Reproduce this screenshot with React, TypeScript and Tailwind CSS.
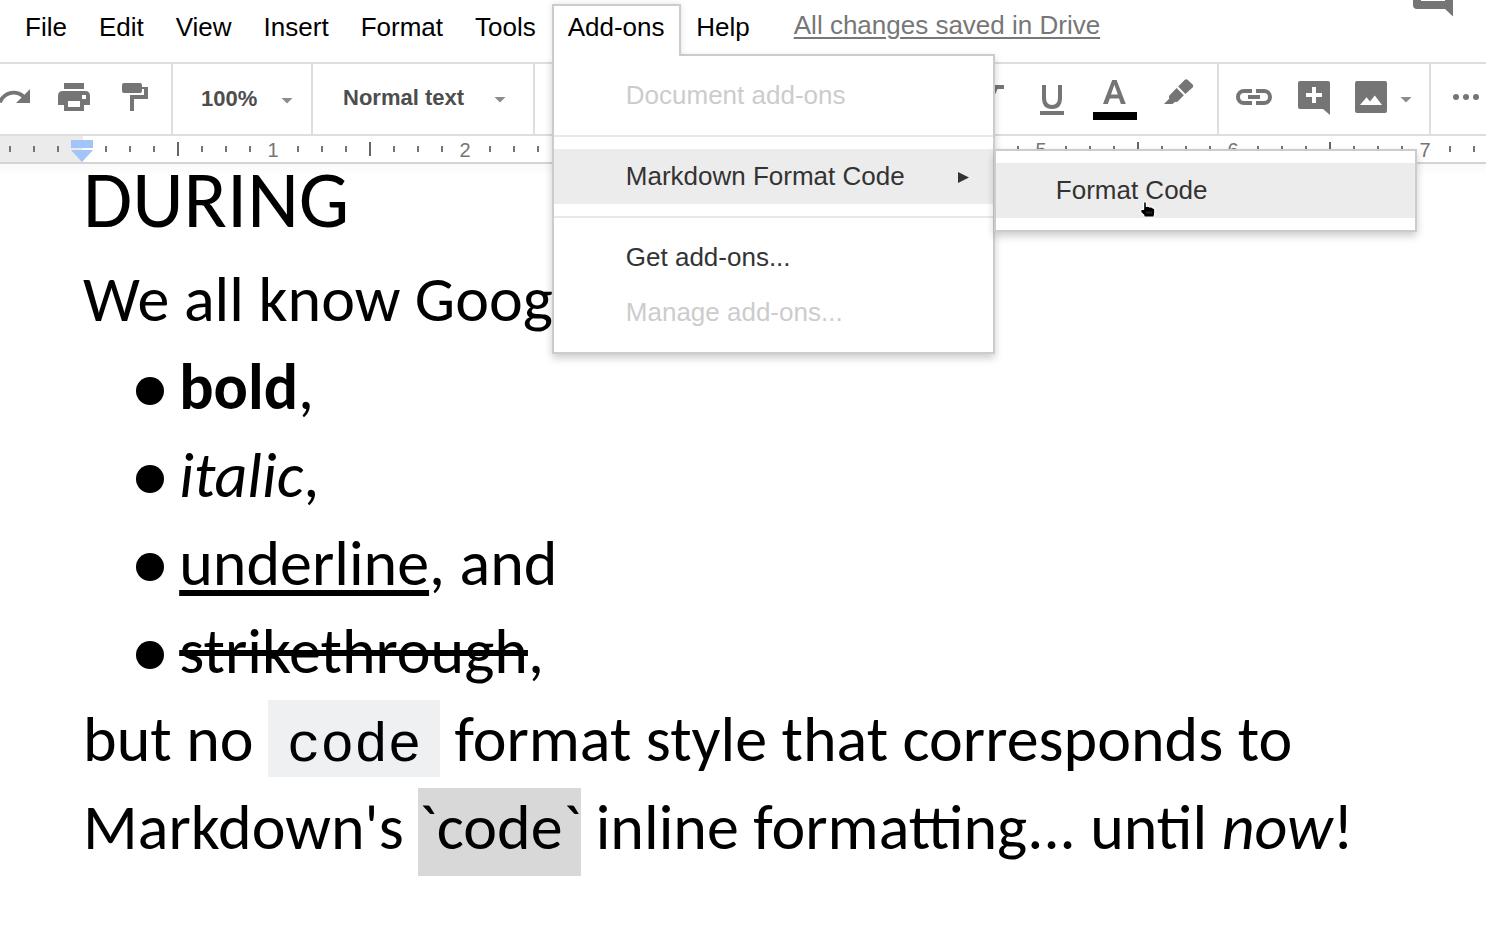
import type { ReactNode } from "react";

const menus = ["File", "Edit", "View", "Insert", "Format", "Tools"];

function MenuBar() {
  return (
    <header className="flex h-[62px] shrink-0 items-start pl-[9px] pt-1 text-[26px] leading-[46px] text-black">
      {menus.map((m) => (
        <div key={m} className="px-4">
          {m}
        </div>
      ))}
      <div className="relative z-20 -mb-0.5 h-[52px] w-[129px] border-2 border-b-0 border-[#ccc] bg-white px-3.5 leading-[42px] shadow-[0_0_6px_rgba(0,0,0,0.12)] [clip-path:inset(-8px_-8px_0_-8px)]">
        Add-ons
      </div>
      <div className="pl-[15.6px] pr-4">Help</div>
      <div className="ml-7 leading-[42px] text-[#777] underline decoration-2 underline-offset-[3px]">
        All changes saved in Drive
      </div>
      <svg className="-mt-1 ml-[312.6px] h-[17px] w-10 shrink-0" viewBox="0 0 40 17" fill="#757575">
        <path d="M0 0H8V1H32V0H40V16.5L32 9H4Q0 9 0 5Z" />
      </svg>
    </header>
  );
}

function Icon({ w, children }: { w: number; children: ReactNode }) {
  return (
    <svg width={w} height={70} viewBox={`0 0 ${w} 70`} fill="#757575" className="shrink-0">
      {children}
    </svg>
  );
}

function Caret({ className = "" }: { className?: string }) {
  return (
    <svg width="12" height="6" viewBox="0 0 12 6" className={`shrink-0 ${className}`}>
      <path d="M0.5 0H11.5L6 5.5Z" fill="#8c8c8c" />
    </svg>
  );
}

function Toolbar() {
  return (
    <div className="flex h-[74px] shrink-0 border-y-2 border-[#dedede]">
      <div className="flex w-[173px] shrink-0 border-r-2 border-[#dedede]">
        <Icon w={171}>
          <path
            transform="translate(-4.2 14.2) scale(1.555)"
            d="M18.4 10.6C16.55 8.99 14.15 8 11.5 8c-4.65 0-8.58 3.03-9.96 7.22L3.9 16c1.05-3.19 4.05-5.5 7.6-5.5 1.95 0 3.73.72 5.12 1.88L13 16h9V7l-3.6 3.6z"
          />
          <path d="M64 19H84V25H64Z" />
          <path
            fillRule="evenodd"
            d="M63 27H85Q90 27 90 32V41H84V47H64V41H58V32Q58 27 63 27ZM68 37V43H80V37ZM82 31V35H86V31Z"
          />
          <path d="M124 19H140Q142 19 142 21V23H148V35H134V47H130V31H144V25H142V27Q142 29 140 29H124Q122 29 122 27V21Q122 19 124 19Z" />
        </Icon>
      </div>
      <div className="flex w-[140px] shrink-0 items-center justify-between border-r-2 border-[#dedede] pl-7 pr-[18px] text-[22px] font-bold text-[#4d4d4d]">
        <span className="-mt-0.5">100%</span>
        <Caret className="mt-1" />
      </div>
      <div className="flex w-[222px] shrink-0 items-center justify-between border-r-2 border-[#dedede] pl-[30px] pr-[27px] text-[22px] font-bold text-[#4d4d4d]">
        <span className="-mt-1">Normal text</span>
        <Caret className="mt-0.5" />
      </div>
      <div className="flex w-[684px] shrink-0 justify-end border-r-2 border-[#dedede]">
        <Icon w={236}>
          <path d="M2 21H23V25H16.5L8 44H2V40L9 25H2Z" />
          <path
            d="M63 21V33.5Q63 43 71 43T79 33.5V21"
            fill="none"
            stroke="#757575"
            strokeWidth="4"
          />
          <path d="M59 47H83V51H59Z" />
          <path
            fillRule="evenodd"
            d="M131.2 16H135.6L144.8 40H139.9L138 34.6H128.8L126.9 40H122ZM130 30.6H136.8L133.4 20.8Z"
          />
          <path d="M112 48H156V56H112Z" fill="#000" />
          <path d="M203.8 15.8Q205.2 14.6 206.6 15.8L211.6 20.6Q212.9 22 211.6 23.4L204.4 30L197.2 22.6Z" />
          <path d="M195.6 24L202.8 31.2L197 37.3Q195.6 38.4 194.2 37.8L191.5 40H183L188.4 34.6Q187.2 33 188.4 31.6Z" />
        </Icon>
      </div>
      <div className="flex w-[212px] shrink-0 items-center border-r-2 border-[#dedede]">
        <Icon w={168}>
          <path
            d="M33 27H25A6 6 0 0 0 25 39H33M37 27H45A6 6 0 0 1 45 39H37"
            fill="none"
            stroke="#757575"
            strokeWidth="4"
          />
          <path d="M29 31H41V35H29Z" />
          <path
            fillRule="evenodd"
            d="M81 17H109Q111 17 111 19V51L104 45H81Q79 45 79 43V19Q79 17 81 17ZM93 23V29H87V33H93V39H97V33H103V29H97V23Z"
          />
          <path
            fillRule="evenodd"
            d="M138 17H166Q168 17 168 19V47Q168 49 166 49H138Q136 49 136 47V19Q136 17 138 17ZM141 41H163L155.8 31.5L151 37.6L147.6 33.3Z"
          />
        </Icon>
        <Caret className="ml-[13px] mt-0.5" />
      </div>
      <div className="flex items-center gap-1 pb-1 pl-[22px]">
        {[0, 1, 2].map((i) => (
          <span key={i} className="size-1.5 rounded-full bg-[#757575]" />
        ))}
      </div>
    </div>
  );
}

function Ruler() {
  return (
    <div className="relative flex h-7 shrink-0 overflow-hidden border-b-2 border-[#d4d4d4]">
      <div className="-ml-0.5 flex h-full bg-[linear-gradient(to_right,#ebebeb_85px,transparent_85px)]">
        {Array.from({ length: 63 }, (_, j) => {
          const k = j - 3;
          return (
            <div key={j} className="flex h-full w-6 shrink-0 items-center justify-center">
              {k > 0 && k % 8 === 0 ? (
                <span className="-ml-0.5 mt-0.5 text-xl leading-none text-[#757575]">{k / 8}</span>
              ) : k > 0 && k % 4 === 0 ? (
                <span className="h-3.5 w-0.5 bg-[#666]" />
              ) : k === 0 ? null : (
                <span className="h-1.5 w-0.5 bg-[#757575]" />
              )}
            </div>
          );
        })}
      </div>
      <svg className="absolute left-[71px] top-1" width="22" height="22" viewBox="0 0 22 22" fill="#a3c4f8">
        <path d="M0 0H22V8H0ZM0 10H22L11 22Z" />
      </svg>
    </div>
  );
}

function Bullet({ children }: { children: ReactNode }) {
  return (
    <li className="flex h-[88px] pl-[53px]">
      <span className="mr-[15.2px] mt-[29px] size-7 shrink-0 rounded-full bg-black" />
      <span>{children}</span>
    </li>
  );
}

function Document() {
  return (
    <main className="grow whitespace-pre bg-[linear-gradient(to_bottom,#f9f9f9,#fff_12px)] pl-[83px] font-[Carlito,Calibri,Lato,sans-serif] text-[64px] leading-[78px] text-black">
      <h1 className="h-24 text-[80px] leading-[72px]">DURING</h1>
      <p className="h-[88px]">We all know Goog</p>
      <ul>
        <Bullet>
          <b>bold</b>,
        </Bullet>
        <Bullet>
          <i>italic</i>,
        </Bullet>
        <Bullet>
          <span className="underline decoration-[6px] underline-offset-[5px] [text-decoration-skip-ink:none]">underline</span>, and
        </Bullet>
        <Bullet>
          <span className="line-through decoration-[6px]">strikethrough</span>,
        </Bullet>
      </ul>
      <p className="flex h-[88px]">
        <span>{"but no "}</span>
        <code className="h-[77px] w-[172px] bg-[#eef0f2] pl-[19px] font-['Liberation_Mono',monospace] text-[56px] leading-[92px]">
          code
        </code>
        <span>{" format style that corresponds to"}</span>
      </p>
      <p className="flex h-[88px]">
        <span>{"Markdown's "}</span>
        <span className="bg-[#d8d8d8]">`code`</span>
        <span>{" inline formatting... until "}</span>
        <i>now</i>
        <span>!</span>
      </p>
    </main>
  );
}

function AddOnsMenu() {
  return (
    <div className="absolute left-[552px] top-[54px] z-10 flex h-[300px] w-[443px] flex-col border-2 border-[#ccc] bg-white pt-3 text-[26px] leading-[55px] text-[#333] shadow-[0_4px_8px_rgba(0,0,0,0.2)]">
      <div className="h-[55px] pl-[71.8px] text-[#ccc]">Document add-ons</div>
      <hr className="my-3 border-t-2 border-[#e8e8e8]" />
      <div className="flex h-[55px] items-center justify-between bg-[#ececec] pl-[71.8px] pr-6">
        <span>Markdown Format Code</span>
        <svg width="11" height="11" viewBox="0 0 11 11" fill="#333" className="mt-0.5">
          <path d="M0 0L11 5.5L0 11Z" />
        </svg>
      </div>
      <hr className="my-3 border-t-2 border-[#e8e8e8]" />
      <div className="h-[55px] pl-[71.8px]">Get add-ons...</div>
      <div className="h-[55px] pl-[71.8px] text-[#ccc]">Manage add-ons...</div>
    </div>
  );
}

function SubMenu() {
  return (
    <div className="absolute left-[994px] top-[149px] z-30 h-[83px] w-[423px] border-2 border-[#ccc] bg-white py-3 text-[26px] leading-[55px] text-[#333] shadow-[0_4px_8px_rgba(0,0,0,0.2)]">
      <div className="h-[55px] bg-[#ececec] pl-[59.8px]">Format Code</div>
    </div>
  );
}

function HandCursor() {
  return (
    <svg className="absolute left-[1140px] top-[201px] z-40" width="17" height="17" viewBox="0 0 17 17">
      <path
        d="M3.6 1.5Q5 0 6.4 1.5V5.5L8 5L9.5 6L11.5 6L13 7L14.8 7.6V12L14 16H4.2L3.6 14L0.8 11.5V8.3H3.6Z"
        fill="#000"
        stroke="#fff"
        strokeWidth="1.2"
        strokeLinejoin="round"
      />
      <path d="M7 10.5V12.5M9 10.5V12.5M11 10.5V12.5" stroke="#777" strokeWidth="0.6" />
    </svg>
  );
}

export default function App() {
  return (
    <div className="relative flex h-[929px] w-[1486px] flex-col overflow-hidden bg-white font-['Liberation_Sans',Arial,sans-serif]">
      <MenuBar />
      <Toolbar />
      <Ruler />
      <Document />
      <AddOnsMenu />
      <SubMenu />
      <HandCursor />
    </div>
  );
}
